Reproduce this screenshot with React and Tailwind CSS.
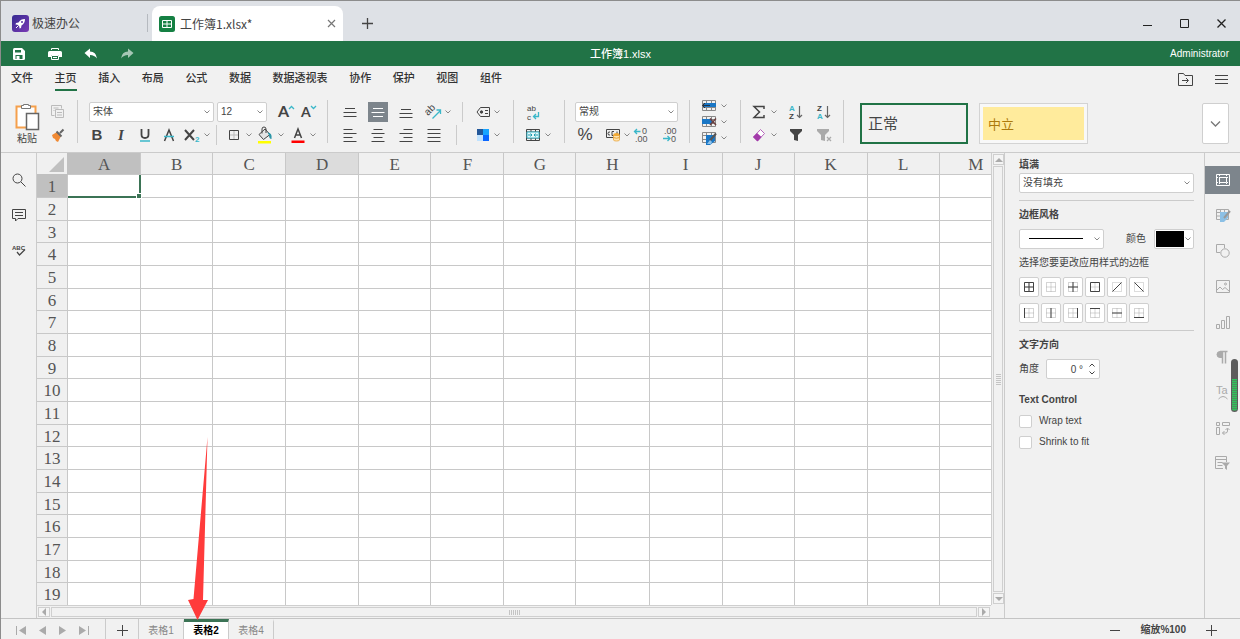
import { useState } from "react";

const menus = ["文件", "主页", "插入", "布局", "公式", "数据", "数据透视表", "协作", "保护", "视图", "组件"];
const columns = "ABCDEFGHIJKLM".split("");
const rows = Array.from({ length: 19 }, (_, i) => i + 1);
const colWidths = ["w-[73px]", "w-[72px]", "w-[73px]", "w-[73px]", "w-[72px]"];
const rowHeights = ["h-[23px]", "h-[23px]", "h-[22px]"];
const sheets = ["表格1", "表格2", "表格4"];

/* ─── SMALL PARTS ─── */
function Svg({ w = 16, h = 16, children, className = "", ...rest }) {
  return (
    <svg
      width={w}
      height={h}
      viewBox={`0 0 ${w} ${h}`}
      fill="none"
      stroke="currentColor"
      aria-hidden="true"
      className={`block shrink-0 ${className}`}
      {...rest}
    >
      {children}
    </svg>
  );
}

function Tool({ label, className = "w-5", children }) {
  return (
    <button
      type="button"
      aria-label={label}
      className={`flex h-5 shrink-0 items-center justify-center ${className}`}
    >
      {children}
    </button>
  );
}

function Caret({ className = "text-[#888]" }) {
  return (
    <Svg w={8} h={6} className={className}>
      <path d="M1.5 1.5 4 4l2.5-2.5" />
    </Svg>
  );
}

function More({ label, className = "" }) {
  return (
    <button
      type="button"
      aria-label={label}
      className={`flex h-5 w-2 shrink-0 items-center justify-center ${className}`}
    >
      <Caret />
    </button>
  );
}

function Divider({ className = "" }) {
  return <div className={`mt-[3px] h-[43px] w-px shrink-0 bg-[#cbcbcb] ${className}`} />;
}

function ShortDivider({ className = "" }) {
  return <div className={`h-5 w-px shrink-0 bg-[#cbcbcb] ${className}`} />;
}

function Group({ className = "", children }) {
  return <div className={`mt-[5px] flex shrink-0 flex-col gap-[3px] ${className}`}>{children}</div>;
}

function Row({ className = "", children }) {
  return <div className={`flex h-5 items-center ${className}`}>{children}</div>;
}

function Select({ label, options, className = "" }) {
  return (
    <div className={`relative h-5 ${className}`}>
      <select
        aria-label={label}
        className="block h-full w-full appearance-none rounded-[2px] border border-[#cfcfcf] bg-white pl-[3px] pr-3 text-[10px] leading-4 text-[#444] outline-none"
      >
        {options.map((o) => (
          <option key={o}>{o}</option>
        ))}
      </select>
      <span className="pointer-events-none absolute right-[3px] top-[7px]">
        <Caret />
      </span>
    </div>
  );
}

/* ─── ICONS ─── */
function Lines({ d, className = "text-[#444]" }) {
  return (
    <Svg className={className}>
      <path d={d} />
    </Svg>
  );
}

function CellsIcon({ kind }) {
  return (
    <Svg w={16} h={14}>
      <path d="M1.5 1.5h13v10h-13zM1.5 4.5h13M1.5 8.5h13M5.5 1.5v10M10.5 1.5v10" stroke="#888" />
      {kind === "insert" && (
        <>
          <path d="M3 4h12v4H3z" fill="#1976c5" stroke="none" />
          <path d="M1.500 6.500H9M4 4 1.500 6.500 4 9" stroke="#234" />
        </>
      )}
      {kind === "delete" && (
        <>
          <path d="M1 4h10v5H1z" fill="#1976c5" stroke="none" />
          <path d="m9 3.500 6 6.500M15 3.500 9 10" stroke="#6b3f3f" strokeWidth="1.500" />
        </>
      )}
      {kind === "format" && (
        <>
          <path d="M5 4h9v6l-5 4H5z" fill="#1976c5" stroke="none" />
          <path d="m15 2.500-6 7" stroke="#555" strokeWidth="2" />
          <path d="m9 9-3 4h4l1-2z" fill="#8fc3ea" stroke="none" />
        </>
      )}
    </Svg>
  );
}

function SortIcon({ top, bottom, topClass, bottomClass }) {
  return (
    <Svg w={16} h={16}>
      <text x="1" y="7" fontSize="8" fontWeight="700" fontFamily="Liberation Sans, sans-serif" stroke="none" className={topClass}>
        {top}
      </text>
      <text x="1" y="15" fontSize="8" fontWeight="700" fontFamily="Liberation Sans, sans-serif" stroke="none" className={bottomClass}>
        {bottom}
      </text>
      <path d="M11.5 2v11.500M9 11l2.500 2.500L14 11" stroke="#666" strokeWidth="1.200" />
    </Svg>
  );
}

const dots = "M1.5 1.5h9v9h-9zM6 1.5v9M1.5 6h9";
const borderKinds = [
  { label: "所有边框", d: "M1.5 1.5h9v9h-9zM6 1.5v9M1.5 6h9" },
  { label: "无边框", d: "" },
  { label: "内部边框", d: "M6 1v10M1 6h10" },
  { label: "外部边框", d: "M1.5 1.5h9v9h-9z" },
  { label: "斜上边框", d: "M1.5 10.5l9-9", plain: true },
  { label: "斜下边框", d: "M1.5 1.5l9 9", plain: true },
  { label: "左边框", d: "M1.5 1v10" },
  { label: "垂直边框", d: "M6 1v10" },
  { label: "右边框", d: "M10.5 1v10" },
  { label: "上边框", d: "M1 1.5h10" },
  { label: "水平边框", d: "M1 6h10" },
  { label: "下边框", d: "M1 10.5h10" },
];

const sideTools = [
  {
    label: "单元格设置",
    icon: (
      <Svg w={14} h={12}>
        <path d="M.5.5h13v11H.5zM3.5 3.5h7v5h-7z" />
        <path d="M3.5 1v10M10.5 1v10M1 3.5h12M1 8.5h12" strokeDasharray="1 1" />
      </Svg>
    ),
  },
  {
    label: "表格设置",
    icon: (
      <Svg w={16} h={14}>
        <path d="M1.5 1.5h12v10h-12zM1.5 4.5h12M1.5 8h12M5.5 1.5v10M9.5 1.5v10" />
        <path d="M5 4h8v6l-4 4H5z" fill="#8cc0e5" stroke="none" />
        <path d="m15 3-6 7" stroke="#999" strokeWidth="2" />
      </Svg>
    ),
  },
  {
    label: "形状设置",
    icon: (
      <Svg w={14} h={14}>
        <path d="M4 8.500H.5v-8h8V4" />
        <circle cx="9" cy="9" r="4.2" />
      </Svg>
    ),
  },
  {
    label: "图像设置",
    icon: (
      <Svg w={14} h={13}>
        <path d="M.5.5h13v12H.5zM1 10l3-3 2.500 2.500L9 7.500l4 3.500" />
        <circle cx="9.500" cy="4" r="1" />
      </Svg>
    ),
  },
  {
    label: "图表设置",
    icon: (
      <Svg w={14} h={14}>
        <path d="M.5 9.500h3v4h-3zM5.500 5.500h3v8h-3zM10.500 1.500h3v12h-3z" />
      </Svg>
    ),
  },
  {
    label: "段落设置",
    icon: (
      <Svg w={14} h={14}>
        <path d="M6 1.500H4a3 3 0 0 0 0 6h2z" fill="currentColor" />
        <path d="M6.500 1v12.500M9.500 1v12.500M4 1.500h7.500" strokeWidth="1.500" />
      </Svg>
    ),
  },
  {
    label: "艺术字设置",
    icon: (
      <Svg w={14} h={16}>
        <text x="0" y="10" fontSize="11" fill="currentColor" stroke="none" fontFamily="Liberation Sans, sans-serif">
          Ta
        </text>
        <path d="M2.500 15q4.500-5 9 0" />
      </Svg>
    ),
  },
  {
    label: "数据透视表设置",
    icon: (
      <Svg w={14} h={14}>
        <path d="M.5 1.500h3v3h-3zM6.500 1.500h7v3h-7zM.5 6.500h3v7h-3zM6.500 12h3q2 0 2-2V7.500M8.500 10l-2 2 2 2M9.500 9l2-2 2 2" />
      </Svg>
    ),
  },
  {
    label: "切片器设置",
    icon: (
      <Svg w={15} h={14}>
        <path d="M8 12.500H.5V.5h11V6M.5 3.500h11M2.500 6.500h5M2.500 9.500h5" />
        <path d="M6.500 6.500H15l-3 3.500v4l-2-1.500V10z" fill="currentColor" stroke="none" />
      </Svg>
    ),
  },
];

/* ─── TITLE BAR ─── */
function TitleBar() {
  return (
    <header className="shrink-0">
      <div className="flex h-[41px] items-stretch border-t border-[#8c8c8c] bg-[#dee1e6] font-['Noto_Sans_CJK_SC',sans-serif] text-xs text-[#444]">
        <button type="button" className="ml-[11px] flex w-[135px] items-center gap-[3px] pt-1">
          <svg width="17" height="17" viewBox="0 0 17 17" aria-hidden="true">
            <defs>
              <linearGradient id="rocket" x1="0" y1="0" x2="1" y2="1">
                <stop offset="0" stopColor="#352a91" />
                <stop offset="1" stopColor="#7a3ab4" />
              </linearGradient>
            </defs>
            <rect width="17" height="17" rx="3" fill="url(#rocket)" />
            <path d="M13 4c-3 0-5 1-6.500 3.500L4 8l-.500 1.500 2 .2L7.300 11.500l.2 2L9 13l.5-2.500C12 9 13 7 13 4z" fill="#fff" />
            <path d="m6 11-2 2" stroke="#fff" />
            <circle cx="10" cy="7" r="1" fill="#5b33a5" />
          </svg>
          极速办公
        </button>
        <div className="mt-[13px] h-[18px] w-px bg-[#b5b9bf]" />
        <div className="ml-1 mt-[5px] flex w-[191px] items-center rounded-t-lg bg-white pl-[7px] pr-[7px]">
          <svg width="16" height="16" viewBox="0 0 16 16" aria-hidden="true">
            <rect width="16" height="16" rx="2.500" fill="#158043" />
            <path d="M3.500 4.500h9v7h-9zM8 4.500v7M3.500 8h9" fill="none" stroke="#fff" />
          </svg>
          <span className="ml-[5px] flex-1">工作簿1.xlsx*</span>
          <button type="button" aria-label="关闭标签" className="text-[#777]">
            <Svg w={9} h={9}>
              <path d="m1 1 7 7M8 1 1 8" strokeWidth="1.200" />
            </Svg>
          </button>
        </div>
        <button type="button" aria-label="新建标签" className="ml-[18px] mt-[5px] flex items-center text-[#444]">
          <Svg w={13} h={13}>
            <path d="M6.500 1v11M1 6.500h11" strokeWidth="1.300" />
          </Svg>
        </button>
        <div className="ml-auto mr-[13px] mt-1 flex items-center gap-[26px] text-[#222]">
          <button type="button" aria-label="最小化">
            <Svg w={11} h={11}>
              <path d="M1 7.500h9" />
            </Svg>
          </button>
          <button type="button" aria-label="最大化">
            <Svg w={11} h={11}>
              <path d="M1.500 1.500h8v8h-8z" />
            </Svg>
          </button>
          <button type="button" aria-label="关闭">
            <Svg w={11} h={11}>
              <path d="m1.500 1.500 8 8M9.500 1.500l-8 8" strokeWidth="1.300" />
            </Svg>
          </button>
        </div>
      </div>

      <div className="grid h-[25px] grid-cols-3 items-center bg-[#217346] pl-[11px] pr-[11px] text-white">
        <div className="flex items-center gap-[22px]">
          <button type="button" aria-label="保存">
            <Svg w={14} h={14}>
              <path d="M1 2.500Q1 1 2.500 1H10l3 3v7.500q0 1.500-1.500 1.500h-9Q1 13 1 11.500z" fill="#fff" stroke="none" />
              <path d="M3 3h6v2.500H3zM3.500 8h7v4h-7z" fill="#217346" stroke="none" />
              <path d="M4.500 9h3v3h-3z" fill="#fff" stroke="none" />
            </Svg>
          </button>
          <button type="button" aria-label="打印">
            <Svg w={14} h={14}>
              <path d="M3.500 3V1.500h7V3" />
              <path d="M1.500 4h11Q14 4 14 5.500V10h-3V8H3v2H0V5.500Q0 4 1.500 4z" fill="#fff" stroke="none" />
              <path d="M3.500 8.500h7v4h-7zM5 10.500h4" />
            </Svg>
          </button>
          <button type="button" aria-label="撤销">
            <Svg w={14} h={14}>
              <path d="M.5 6 6 1.500V4.500q6 0 7 7-2.500-3.500-7-3.500v3z" fill="#fff" stroke="none" />
            </Svg>
          </button>
          <button type="button" aria-label="重做" className="text-white/60">
            <Svg w={14} h={14}>
              <path d="M13.500 6 8 1.500V4.500q-6 0-7 7Q3.500 8 8 8v3z" fill="currentColor" stroke="none" />
            </Svg>
          </button>
        </div>
        <h1 className="text-center text-[11px] font-medium leading-4">工作簿1.xlsx</h1>
        <span className="text-right text-[10px] leading-4">Administrator</span>
      </div>
    </header>
  );
}

/* ─── MENU ─── */
function Menu({ active, onSelect }) {
  return (
    <div className="flex h-[25px] shrink-0 items-stretch justify-between pl-[10px] pr-3">
      <nav className="flex w-[491px] justify-between">
        {menus.map((m) => (
          <button
            key={m}
            type="button"
            onClick={() => onSelect(m)}
            className={`whitespace-nowrap border-b-2 pt-px text-[11px] font-medium leading-4 text-[#333] ${
              active === m ? "border-[#217346]" : "border-transparent"
            }`}
          >
            {m}
          </button>
        ))}
      </nav>
      <div className="flex items-center gap-[22px] pt-px text-[#444]">
        <button type="button" aria-label="打开文件位置">
          <Svg w={15} h={13}>
            <path d="M.5 12.500V.5h5l1.500 2h7.500v10zM4 7.500h6M8 5l2.500 2.500L8 10" />
          </Svg>
        </button>
        <button type="button" aria-label="菜单">
          <Svg w={13} h={11}>
            <path d="M0 1.500h13M0 5.500h13M0 9.500h13" />
          </Svg>
        </button>
      </div>
    </div>
  );
}

/* ─── RIBBON ─── */
function Ribbon() {
  return (
    <div className="flex h-[62px] shrink-0 items-start border-b border-[#cbcbcb] pt-[6px] text-[#444]">
      <button type="button" className="ml-3 mt-[6px] flex w-7 shrink-0 flex-col items-center text-[10px] leading-4">
        <Svg w={26} h={28}>
          <path d="M2.500 3.500h19v21h-19z" fill="#fff" stroke="#f5a04c" strokeWidth="2" />
          <path d="M7.500 5.500v-3h2v-1h5v1h2v3z" fill="#fff" stroke="#777" />
          <path d="M12.500 10.500h12v16h-12z" fill="#fff" stroke="#666" strokeWidth="1.500" />
        </Svg>
        粘贴
      </button>
      <Group className="ml-[7px]">
        <Tool label="复制">
          <Svg w={14} h={14} className="text-[#bbb]">
            <path d="M3.500 10.500h-3V.5h10v3M2.500 3h5M2.500 5.500h1" />
            <path d="M4.500 4.500h8v8h-8zM6 7.500h5M6 10h5" />
          </Svg>
        </Tool>
        <Tool label="格式刷">
          <Svg w={14} h={14}>
            <path d="m1 7 5-3 4 4-3 6-2-1-1-2-2-1z" fill="#f08a35" stroke="none" />
            <path d="m5.500 3.500 5 5M9 5l3.500-3.500" stroke="#666" strokeWidth="2" />
          </Svg>
        </Tool>
      </Group>
      <Divider className="ml-[9px]" />

      <Group className="ml-[7px]">
        <Row>
          <Select label="字体" options={["宋体"]} className="ml-1 w-[125px]" />
          <Select label="字号" options={["12"]} className="ml-[3px] w-[50px]" />
          <Tool label="增大字号" className="ml-2 w-[22px]">
            <Svg w={18} h={16}>
              <text x="1" y="13" fontSize="16" fontWeight="700" fill="#444" stroke="none" fontFamily="Lato, sans-serif">A</text>
              <path d="m12 5 2.500-2.500L17 5" stroke="#3ab7c9" strokeWidth="1.300" />
            </Svg>
          </Tool>
          <Tool label="减小字号" className="w-[22px]">
            <Svg w={18} h={16}>
              <text x="2" y="13" fontSize="14" fontWeight="700" fill="#444" stroke="none" fontFamily="Lato, sans-serif">A</text>
              <path d="m12 2 2.500 2.500L17 2" stroke="#3ab7c9" strokeWidth="1.300" />
            </Svg>
          </Tool>
        </Row>
        <Row>
          <Tool label="加粗" className="w-6 text-[15px] font-bold">B</Tool>
          <Tool label="倾斜" className="w-6 font-['Liberation_Serif',serif] text-[15px] font-bold italic">I</Tool>
          <Tool label="下划线" className="w-6">
            <Svg>
              <path d="M4.500 2v5.500q0 3.500 3.500 3.500t3.500-3.500V2" strokeWidth="1.800" />
              <path d="M3 14h10" stroke="#3ab7c9" strokeWidth="1.500" />
            </Svg>
          </Tool>
          <Tool label="删除线" className="w-6">
            <Svg>
              <path d="m3.500 14 4.500-11 4.500 11" strokeWidth="1.500" />
              <path d="M3 9.500h10" stroke="#3ab7c9" strokeWidth="1.500" />
            </Svg>
          </Tool>
          <Tool label="下标" className="w-[22px]">
            <Svg w={18} h={16}>
              <path d="m2 3 9 10M11 3 2 13" strokeWidth="2" />
              <text x="12" y="15" fontSize="8" fontWeight="700" fill="#3ab7c9" stroke="none" fontFamily="Liberation Sans, sans-serif">2</text>
            </Svg>
          </Tool>
          <More label="更多上下标" />
          <ShortDivider className="ml-[5px]" />
          <Tool label="边框" className="ml-[7px] w-5">
            <Svg w={12} h={12}>
              <path d="M6 1v10M1 6h10" stroke="#bbb" />
              <path d="M1.500 1.500h9v9h-9z" />
            </Svg>
          </Tool>
          <More label="更多边框" className="ml-px" />
          <Tool label="填充颜色" className="w-6">
            <Svg w={16} h={18}>
              <path d="m2 8.500 6-5.500 5 5.500-6.500 5z" fill="#e4e4e4" />
              <path d="M5 7.500V3q0-2 2-2t2 2v4" />
              <path d="M10.500 6.500q5 0 4 6.500-2.500 0-2.500-4z" fill="#2b96a8" stroke="none" />
              <path d="M1 15h13v2.500H1z" fill="#ff0" stroke="none" />
            </Svg>
          </Tool>
          <More label="更多填充颜色" />
          <Tool label="字体颜色" className="ml-[3px] w-5">
            <Svg w={14} h={16}>
              <path d="m3.500 11 3.500-9 3.500 9M5 8h4" strokeWidth="1.500" />
              <path d="M.5 13.500h13V16H.5z" fill="#f00" stroke="none" />
            </Svg>
          </Tool>
          <More label="更多字体颜色" className="ml-px" />
        </Row>
      </Group>
      <Divider className="ml-2" />

      <Group className="ml-3">
        <Row>
          <Tool label="顶端对齐"><Lines d="M3 4.500h10M1.500 8.500h13M1.500 12.500h13" /></Tool>
          <Tool label="垂直居中" className="ml-2 w-5 bg-[#7d858c]">
            <Lines d="M3 4.500h10M1.500 8.500h13M3 12.500h10" className="text-white" />
          </Tool>
          <Tool label="底端对齐" className="ml-2 w-5"><Lines d="M3 5.500h10M1.500 9.500h13M1.500 13.500h13" /></Tool>
          <Tool label="文字方向" className="ml-2 w-5">
            <Svg w={18} h={18}>
              <text x="3" y="13" fontSize="10" fill="#444" stroke="none" fontFamily="Liberation Sans, sans-serif" transform="rotate(-45 3 13)">ab</text>
              <path d="m7.500 15.500 8-8M11.500 7h4v4" stroke="#3ab7c9" strokeWidth="1.300" />
            </Svg>
          </Tool>
          <More label="更多方向" />
          <ShortDivider className="ml-[10px]" />
          <Tool label="定义名称" className="ml-[10px] w-5">
            <Svg w={16} h={12}>
              <path d="M5.500 1.500h9v9h-9L2 6zM10 4.500h3M10 7.500h3" />
              <circle cx="6.500" cy="6" r="1.200" fill="currentColor" />
            </Svg>
          </Tool>
          <More label="更多名称" />
        </Row>
        <Row>
          <Tool label="左对齐"><Lines d="M1.500 2.500h9M1.500 6.500h13M1.500 10.500h9M1.500 14.500h13" /></Tool>
          <Tool label="居中" className="ml-2 w-5"><Lines d="M3.500 2.500h9M1.500 6.500h13M3.500 10.500h9M1.500 14.500h13" /></Tool>
          <Tool label="右对齐" className="ml-2 w-5"><Lines d="M5.500 2.500h9M1.500 6.500h13M5.500 10.500h9M1.500 14.500h13" /></Tool>
          <Tool label="两端对齐" className="ml-2 w-5"><Lines d="M1.500 2.500h13M1.500 6.500h13M1.500 10.500h13M1.500 14.500h13" /></Tool>
          <ShortDivider className="ml-3" />
          <Tool label="配色方案" className="ml-4 w-5">
            <Svg w={12} h={12} stroke="none">
              <path d="M0 0h6v6H0z" fill="#235799" />
              <path d="M6 0h6v6H6z" fill="#18a4ff" />
              <path d="M0 6h6v6H0z" fill="#bfe2ff" />
              <path d="M6 6h6v6H6z" fill="#0a66ff" />
            </Svg>
          </Tool>
          <More label="更多配色" />
        </Row>
      </Group>
      <Divider className="ml-3" />

      <Group className="ml-[9px]">
        <Row>
          <Tool label="自动换行">
            <Svg w={14} h={18}>
              <text x="1" y="8" fontSize="8" fill="#444" stroke="none" fontFamily="Liberation Sans, sans-serif">ab</text>
              <text x="1" y="17" fontSize="8" fill="#444" stroke="none" fontFamily="Liberation Sans, sans-serif">c</text>
              <path d="M12.500 9v4.500h-5M10 11l-2.500 2.500L10 16" stroke="#3ab7c9" strokeWidth="1.300" />
            </Svg>
          </Tool>
        </Row>
        <Row>
          <Tool label="合并单元格">
            <Svg w={14} h={14}>
              <path d="M.5 1.500h13v11H.5zM.5 4h13M.5 10h13M5 1.500V4M9.500 1.500V4M5 10v2.500M9.500 10v2.500" />
              <path d="M1 4h12v6H1z" fill="#e6f8fa" stroke="#3ab7c9" />
              <path d="M2 7h4M4.500 5.500 6 7 4.500 8.500M12 7H8M9.500 5.500 8 7l1.500 1.500" stroke="#1d9db0" />
            </Svg>
          </Tool>
          <More label="更多合并" className="ml-px" />
        </Row>
      </Group>
      <Divider className="ml-3" />

      <Group className="ml-[10px]">
        <Row>
          <Select label="数字格式" options={["常规"]} className="w-[103px]" />
        </Row>
        <Row>
          <Tool label="百分比" className="w-5 text-[17px]">%</Tool>
          <Tool label="会计格式" className="ml-2 w-5">
            <Svg w={15} h={14}>
              <path d="M.5 1.500h13v8H.5zM4 4q-2-.5-2 1.500T4 7M8 3.500H6v4h2M11 3.500v3" />
              <path d="M7.500 7v5q0 1 3 1t3-1V7z" fill="#ffe4ae" stroke="#e8a33a" strokeWidth=".8" />
              <ellipse cx="10.500" cy="6.500" rx="3" ry="1.500" fill="#f2a934" stroke="none" />
              <path d="M7.500 9.500q3 1.500 6 0" stroke="#e8a33a" />
            </Svg>
          </Tool>
          <More label="更多会计格式" />
          <Tool label="减少小数位">
            <Svg>
              <text x="9" y="7" fontSize="9" fill="#555" stroke="none" fontFamily="Liberation Sans, sans-serif">0</text>
              <text x="2" y="15" fontSize="9" fill="#555" stroke="none" fontFamily="Liberation Sans, sans-serif">.00</text>
              <path d="M7.500 4.500h-6M4 2 1.500 4.500 4 7" stroke="#3ab7c9" strokeWidth="1.300" />
            </Svg>
          </Tool>
          <Tool label="增加小数位" className="ml-[9px] w-5">
            <Svg>
              <text x="2" y="7" fontSize="9" fill="#555" stroke="none" fontFamily="Liberation Sans, sans-serif">.00</text>
              <text x="9" y="15" fontSize="9" fill="#555" stroke="none" fontFamily="Liberation Sans, sans-serif">0</text>
              <path d="M1 11.500h7M5.500 9 8 11.500 5.500 14" stroke="#3ab7c9" strokeWidth="1.300" />
            </Svg>
          </Tool>
        </Row>
      </Group>
      <Divider className="ml-[9px]" />

      <div className="ml-[9px] mt-px flex shrink-0 flex-col">
        {[
          ["insert", "插入单元格"],
          ["delete", "删除单元格"],
          ["format", "套用表格格式"],
        ].map(([kind, label]) => (
          <div key={kind} className="flex h-4 items-center">
            <button type="button" aria-label={label} className="flex w-5 justify-center">
              <CellsIcon kind={kind} />
            </button>
            <button type="button" aria-label={`更多${label}`} className="ml-px">
              <Caret />
            </button>
          </div>
        ))}
      </div>
      <Divider className="ml-3" />

      <Group className="ml-2">
        <Row>
          <Tool label="求和">
            <Svg>
              <path d="M13 5V2.500H3L8.500 8 3 13.500h10V11" strokeWidth="1.500" />
            </Svg>
          </Tool>
          <More label="更多函数" className="ml-px" />
          <Tool label="升序" className="ml-2 w-5">
            <SortIcon top="A" bottom="Z" topClass="fill-[#3ab7c9]" bottomClass="fill-[#444]" />
          </Tool>
          <Tool label="降序" className="ml-2 w-5">
            <SortIcon top="Z" bottom="A" topClass="fill-[#444]" bottomClass="fill-[#3ab7c9]" />
          </Tool>
        </Row>
        <Row>
          <Tool label="清除">
            <Svg w={14} h={14}>
              <path d="m1.500 9 7-7.500 4 4-7 7.500z" fill="#fff" stroke="#b565bb" />
              <path d="m1 9 4-4 4.500 4-4 4.500z" fill="#a33aaa" stroke="none" />
            </Svg>
          </Tool>
          <More label="更多清除" className="ml-px" />
          <Tool label="筛选" className="ml-2 w-5">
            <Svg w={14} h={14}>
              <path d="M1 1h12v2L9 7v6L5 12V7L1 3z" fill="#444" stroke="none" />
            </Svg>
          </Tool>
          <Tool label="清除筛选" className="ml-2 w-5 text-[#aaa]">
            <Svg w={16} h={14}>
              <path d="M1 1h12v2L9 7v6L5 12V7L1 3z" fill="currentColor" stroke="none" />
              <path d="m11 9 4 4M15 9l-4 4" strokeWidth="1.300" />
            </Svg>
          </Tool>
        </Row>
      </Group>
      <Divider className="ml-[9px]" />

      <button type="button" className="ml-4 mt-[6px] h-[41px] w-[108px] shrink-0 border-2 border-[#217346] pl-[6px] pt-[2px] text-left text-[15px]">
        正常
      </button>
      <button type="button" className="ml-[11px] mt-[6px] h-[41px] w-[109px] shrink-0 border border-[#d3d3d3] bg-[#f8f8f8] p-[3px]">
        <span className="flex h-full items-center bg-[#ffeb9c] pl-[5px] pt-[3px] text-[13px] text-[#ad7a0c]">中立</span>
      </button>
      <button
        type="button"
        aria-label="更多样式"
        className="ml-auto mr-[11px] mt-[6px] flex h-[41px] w-[27px] shrink-0 items-center justify-center rounded-[2px] border border-[#cfcfcf] bg-white text-[#777]"
      >
        <Svg w={11} h={8}>
          <path d="m1 1.500 4.500 4.500L10 1.500" strokeWidth="1.300" />
        </Svg>
      </button>
    </div>
  );
}

/* ─── GRID ─── */
function ScrollArrow({ label, d, className }) {
  return (
    <button
      type="button"
      aria-label={label}
      className={`flex shrink-0 items-center justify-center border border-[#cfcfcf] bg-[#f4f4f4] text-[#aaa] ${className}`}
    >
      <Svg w={8} h={8} stroke="none">
        <path d={d} fill="currentColor" />
      </Svg>
    </button>
  );
}

function Grid() {
  const headFont = "font-['Liberation_Serif',serif] text-[17px] font-normal leading-[18px] text-[#555]";
  return (
    <div className="flex min-w-0 flex-1 flex-col bg-[#f1f1f1]">
      <div className="flex min-h-0 flex-1">
        <div className="min-w-0 flex-1 overflow-hidden bg-white">
          <table className="w-[976px] table-fixed border-separate border-spacing-0">
            <thead>
              <tr className="h-[22px]">
                <th aria-label="全选" className="w-[31px] border-b border-r border-[#c0c0c0] bg-[#f0f0f0] p-0">
                  <Svg w={30} h={21} stroke="none">
                    <path d="M27 4v15H12z" fill="#c0c0c0" />
                  </Svg>
                </th>
                {columns.map((c, i) => (
                  <th
                    key={c}
                    scope="col"
                    className={`border-b border-r border-[#c8c8c8] p-0 pt-[2px] ${headFont} ${colWidths[i % 5]} ${
                      c === "A" ? "bg-[#c0c0c0]" : c === "D" ? "bg-[#dcdcdc]" : "bg-[#f0f0f0]"
                    }`}
                  >
                    {c}
                  </th>
                ))}
              </tr>
            </thead>
            <tbody>
              {rows.map((r, i) => (
                <tr key={r} className={rowHeights[i % 3]}>
                  <th
                    scope="row"
                    className={`border-b border-r border-[#c8c8c8] p-0 pt-[2px] ${headFont} ${r === 1 ? "bg-[#c0c0c0]" : "bg-[#f0f0f0]"}`}
                  >
                    {r}
                  </th>
                  {columns.map((c) =>
                    r === 1 && c === "A" ? (
                      <td key={c} className="relative border-b-2 border-r-2 border-[#3b7355] p-0">
                        <span className="absolute -bottom-[3px] -right-[3px] size-[6px] border border-white bg-[#3b7355]" />
                      </td>
                    ) : (
                      <td key={c} className="border-b border-r border-[#c8c8c8] p-0" />
                    )
                  )}
                </tr>
              ))}
            </tbody>
          </table>
        </div>
        <div className="flex w-[13px] shrink-0 flex-col gap-px border-l border-[#cfcfcf] p-px">
          <ScrollArrow label="向上滚动" d="M0 6h8L4 2z" className="h-[11px] w-[11px]" />
          <div className="flex flex-1 flex-col items-center justify-center gap-px border border-[#cfcfcf]">
            {[0, 1, 2, 3, 4, 5].map((n) => (
              <span key={n} className="h-px w-[5px] bg-[#c4c4c4]" />
            ))}
          </div>
          <ScrollArrow label="向下滚动" d="M0 2h8L4 6z" className="h-[11px] w-[11px]" />
        </div>
      </div>
      <div className="mr-[13px] flex h-[13px] shrink-0 gap-px border-t border-[#cfcfcf] p-px">
        <ScrollArrow label="向左滚动" d="M6 0v8L2 4z" className="h-[10px] w-3" />
        <div className="flex h-[10px] flex-1 items-center justify-center gap-px border border-[#cfcfcf]">
          {[0, 1, 2, 3, 4, 5].map((n) => (
            <span key={n} className="h-[5px] w-px bg-[#c4c4c4]" />
          ))}
        </div>
        <ScrollArrow label="向右滚动" d="M2 0v8l4-4z" className="h-[10px] w-3" />
      </div>
    </div>
  );
}

/* ─── SETTINGS PANEL ─── */
function Panel() {
  return (
    <aside className="w-[200px] shrink-0 border-l border-[#cbcbcb] pl-[14px] pr-[10px] pt-1 text-[10px] leading-4 text-[#444]">
      <h2 className="font-bold">填满</h2>
      <Select label="填满" options={["没有填充"]} className="w-full" />
      <hr className="mt-[7px] border-[#cbcbcb]" />

      <h2 className="mt-[6px] font-bold">边框风格</h2>
      <div className="mt-[6px] flex items-center">
        <div className="relative">
          <Select label="边框线型" options={[""]} className="w-[85px]" />
          <span className="pointer-events-none absolute left-[10px] top-[9px] h-px w-[54px] bg-black" />
        </div>
        <label htmlFor="border-color" className="ml-auto">颜色</label>
        <button
          id="border-color"
          type="button"
          className="ml-2 flex h-5 w-10 items-center justify-between rounded-[2px] border border-[#cfcfcf] bg-white px-px"
        >
          <span className="h-4 w-7 bg-black" />
          <Caret />
        </button>
      </div>
      <p className="mt-[6px] whitespace-nowrap">选择您要更改应用样式的边框</p>
      <div className="mt-[6px] grid w-[130px] grid-cols-6 gap-x-[2px] gap-y-[6px]">
        {borderKinds.map((b) => (
          <button
            key={b.label}
            type="button"
            aria-label={b.label}
            className="flex size-5 items-center justify-center rounded-[2px] border border-[#cfcfcf] bg-white"
          >
            <Svg w={12} h={12}>
              {!b.plain && <path d={dots} stroke="#aaa" strokeDasharray="1 1" />}
              {b.plain && <path d="M1.500 1.500h9v9h-9z" stroke="#bbb" strokeDasharray="1 1" />}
              <path d={b.d} stroke="#444" />
            </Svg>
          </button>
        ))}
      </div>
      <hr className="mt-[7px] border-[#cbcbcb]" />

      <h2 className="mt-[6px] font-bold">文字方向</h2>
      <div className="mt-[6px] flex items-center">
        <label htmlFor="angle">角度</label>
        <div className="relative ml-[7px]">
          <input
            id="angle"
            defaultValue="0 °"
            className="block h-5 w-[54px] rounded-[2px] border border-[#cfcfcf] bg-white pr-4 text-right text-[10px] outline-none"
          />
          <div className="absolute right-1 top-[3px] flex flex-col gap-[2px] text-[#444]">
            <button type="button" aria-label="增加角度">
              <Svg w={8} h={6}><path d="M1.500 4.500 4 2l2.500 2.500" /></Svg>
            </button>
            <button type="button" aria-label="减少角度">
              <Caret className="text-[#444]" />
            </button>
          </div>
        </div>
      </div>

      <h2 className="mt-[13px] font-bold">Text Control</h2>
      {["Wrap text", "Shrink to fit"].map((t) => (
        <label key={t} className="mt-[5px] flex h-4 items-center gap-[7px]">
          <input
            type="checkbox"
            className="size-[13px] appearance-none rounded-[2px] border border-[#cfcfcf] bg-white checked:bg-[#217346]"
          />
          {t}
        </label>
      ))}
    </aside>
  );
}

/* ─── STATUS BAR ─── */
function StatusBar({ sheet, onSelect }) {
  return (
    <footer className="flex h-[21px] shrink-0 items-stretch border-t border-[#c4c4c4] text-[10px] leading-4 text-[#888]">
      <div className="flex w-[105px] items-center gap-[11px] border-r border-[#cbcbcb] pl-[15px] pt-[2px] text-[#aaa]">
        {[
          ["第一张", "M0 0h1v9H0zM10 0v9L3 4.500z"],
          ["上一张", "M9 0v9L2 4.500z"],
          ["下一张", "M1 0v9l7-4.500z"],
          ["最后一张", "M0 0v9l7-4.500zM9 0h1v9H9z"],
        ].map(([label, d]) => (
          <button key={label} type="button" aria-label={label}>
            <Svg w={10} h={9} stroke="none">
              <path d={d} fill="currentColor" />
            </Svg>
          </button>
        ))}
      </div>
      <button
        type="button"
        aria-label="添加工作表"
        className="flex w-[33px] items-center justify-center border-r border-[#cbcbcb] pt-[2px] text-[#444]"
      >
        <Svg w={11} h={11}>
          <path d="M5.500 0v11M0 5.500h11" />
        </Svg>
      </button>
      {sheets.map((s) => (
        <button
          key={s}
          type="button"
          onClick={() => onSelect(s)}
          className={`w-[45px] border-r border-t-[3px] border-r-[#cbcbcb] ${
            s === sheet ? "border-t-[#3b7355] bg-white font-bold text-black" : "border-t-transparent"
          }`}
        >
          {s}
        </button>
      ))}
      <div className="ml-auto mr-[23px] flex items-center gap-5 pt-[2px] text-[#444]">
        <button type="button" aria-label="缩小">
          <Svg w={10} h={10}><path d="M0 5.500h10" /></Svg>
        </button>
        <span className="font-bold">缩放%100</span>
        <button type="button" aria-label="放大">
          <Svg w={11} h={11}><path d="M5.500 0v11M0 5.500h11" /></Svg>
        </button>
      </div>
    </footer>
  );
}

export default function App() {
  const [menu, setMenu] = useState("主页");
  const [sheet, setSheet] = useState("表格2");

  return (
    <div className="relative flex h-screen flex-col overflow-hidden border-l border-[#8c8c8c] bg-[#f1f1f1] font-['Liberation_Sans','Noto_Sans_CJK_SC',sans-serif]">
      <TitleBar />
      <Menu active={menu} onSelect={setMenu} />
      <Ribbon />

      <main className="flex min-h-0 flex-1">
        <div className="flex w-9 shrink-0 flex-col items-center gap-[19px] border-r border-[#cbcbcb] pt-[19px] text-[#444]">
          <button type="button" aria-label="查找">
            <Svg>
              <circle cx="6.500" cy="6.500" r="4.500" />
              <path d="m10 10 4.500 4.500" />
            </Svg>
          </button>
          <button type="button" aria-label="批注">
            <Svg>
              <path d="M1.500 2.500h13v9H7l-2.500 2.500v-2.500h-3zM4 5.500h8M4 8.500h8" />
            </Svg>
          </button>
          <button type="button" aria-label="拼写检查">
            <Svg>
              <text x="1" y="8" fontSize="6" fontWeight="700" fill="#444" stroke="none" fontFamily="Liberation Sans, sans-serif">ABC</text>
              <path d="m6 10 2.500 3L14 7.500" strokeWidth="1.200" />
            </Svg>
          </button>
        </div>
        <Grid />
        <Panel />
        <div className="w-9 shrink-0 border-l border-[#cbcbcb] pt-[13px]">
          <div className="flex h-[311px] flex-col justify-between">
            {sideTools.map((t, i) => (
              <button
                key={t.label}
                type="button"
                aria-label={t.label}
                className={`flex h-7 w-full items-center justify-center ${i === 0 ? "bg-[#7d858c] text-white" : "text-[#aaa]"}`}
              >
                {t.icon}
              </button>
            ))}
          </div>
        </div>
      </main>

      <StatusBar sheet={sheet} onSelect={setSheet} />

      {/* Arrow pointing at the active sheet tab */}
      <svg
        width="22"
        height="183"
        viewBox="0 0 22 183"
        aria-hidden="true"
        className="pointer-events-none absolute bottom-[19px] left-[187px]"
      >
        <path d="M19.500 0 15 163h5L9.500 183 0 163l5.500-1z" fill="#ff3b3b" />
      </svg>

      {/* Level meter floating on the window edge */}
      <div className="absolute right-[2px] top-[359px] flex h-[53px] w-[7px] flex-col overflow-hidden rounded-full bg-[#5c5c5c] pt-5">
        <div className="mx-px mb-px flex-1 rounded-b-full bg-[repeating-linear-gradient(#2fc45c_0_1px,#4b8f5e_1px_2px)]" />
      </div>
    </div>
  );
}
